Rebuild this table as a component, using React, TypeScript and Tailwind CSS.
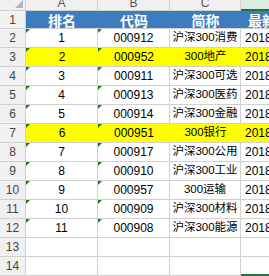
const rows = [
  { rank: "1", code: "000912", name: "沪深300消费" },
  { rank: "2", code: "000952", name: "300地产", hl: true },
  { rank: "3", code: "000911", name: "沪深300可选" },
  { rank: "4", code: "000913", name: "沪深300医药" },
  { rank: "5", code: "000914", name: "沪深300金融" },
  { rank: "6", code: "000951", name: "300银行", hl: true },
  { rank: "7", code: "000917", name: "沪深300公用" },
  { rank: "8", code: "000910", name: "沪深300工业" },
  { rank: "9", code: "000957", name: "300运输" },
  { rank: "10", code: "000909", name: "沪深300材料" },
  { rank: "11", code: "000908", name: "沪深300能源" },
];

const font = { fontFamily: '"Liberation Sans", "Noto Sans CJK SC", sans-serif' };

function Flag() {
  // green "number stored as text" marker
  return (
    <svg width="4" height="4" className="absolute left-0 top-0">
      <polygon points="0,0 4,0 0,4" fill="#1c7a1c" />
    </svg>
  );
}

function RowHead({ n, h }: { n: number; h: string }) {
  return (
    <div className={`w-[26px] ${h} shrink-0 bg-[#f0f0f0] border-r border-b border-[#d0d0d0] flex items-center justify-center text-[12px] text-[#444]`}>
      {n}
    </div>
  );
}

export default function App() {
  return (
    <div className="w-[269px] h-[276px] overflow-hidden bg-white text-[12px] text-black" style={font}>
      {/* column header, top part scrolled out of view */}
      <div className="flex h-[11px] overflow-hidden">
        <div className="w-[26px] shrink-0 bg-[#f0f0f0] border-r border-b border-[#d0d0d0] flex justify-end items-end pr-[2px] pb-[2px]">
          <svg width="8" height="8">
            <polygon points="8,0 8,8 0,8" fill="#b5b5b5" />
          </svg>
        </div>
        {["A", "B", "C"].map((c, i) => (
          <div
            key={c}
            className={`${i === 2 ? "w-[71px]" : "w-[72px]"} shrink-0 bg-[#f0f0f0] border-r border-b border-[#d0d0d0] flex items-end justify-center text-[12px] text-[#555] leading-[14px] overflow-hidden`}
          >
            <span>{c}</span>
          </div>
        ))}
        <div className="flex-1 bg-[#dcebdf] border-b-2 border-[#217346]" />
      </div>

      {/* row 1 */}
      <div className="flex h-[18px]">
        <RowHead n={1} h="h-[18px]" />
        <div className="flex flex-1 bg-[#3d7dbd] text-white font-bold text-[14px] border-b border-[#d0d0d0]" style={{ fontFamily: '"Noto Sans CJK SC", sans-serif' }}>
          <div className="w-[72px] flex items-center justify-center leading-none">排名</div>
          <div className="w-[72px] flex items-center justify-center leading-none">代码</div>
          <div className="w-[71px] flex items-center justify-center leading-none">简称</div>
          <div className="flex-1 flex items-center pl-[7px] leading-none whitespace-nowrap overflow-hidden">最新日期</div>
        </div>
      </div>

      {rows.map((r, i) => (
        <div key={r.code} className="flex h-[19px]">
          <RowHead n={i + 2} h="h-[19px]" />
          <div className={`flex flex-1 border-b border-[#d0d0d0] ${r.hl ? "bg-[#ffff00]" : "bg-white"}`}>
            <div className={`relative w-[72px] flex items-center justify-center ${r.hl ? "" : "border-r border-[#d0d0d0]"}`}>
              <Flag />
              {r.rank}
            </div>
            <div className={`relative w-[72px] flex items-center justify-center ${r.hl ? "" : "border-r border-[#d0d0d0]"}`}>
              <Flag />
              {r.code}
            </div>
            <div className={`w-[71px] flex items-center justify-center whitespace-nowrap text-[11.5px] ${r.hl ? "" : "border-r border-[#d0d0d0]"}`}>
              {r.name}
            </div>
            <div className="flex-1 flex items-center pl-[4px] whitespace-nowrap overflow-hidden">2018-03-30</div>
          </div>
        </div>
      ))}

      {[13, 14].map((n) => (
        <div key={n} className="flex h-[19px]">
          <RowHead n={n} h="h-[19px]" />
          <div className="w-[72px] border-r border-b border-[#d0d0d0]" />
          <div className="w-[72px] border-r border-b border-[#d0d0d0]" />
          <div className="w-[71px] border-r border-b border-[#d0d0d0]" />
          <div className={`flex-1 ${n === 14 ? "border-b-2 border-[#217346]" : "border-b border-[#d0d0d0]"}`} />
        </div>
      ))}
    </div>
  );
}
